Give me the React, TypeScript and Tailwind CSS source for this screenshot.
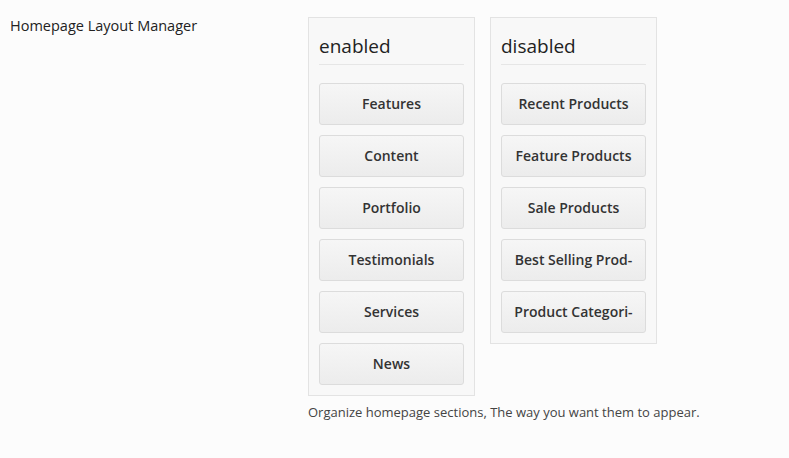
import React from "react";

const enabled = ["Features", "Content", "Portfolio", "Testimonials", "Services", "News"];
const disabled = ["Recent Products", "Feature Products", "Sale Products", "Best Selling Prod-", "Product Categori-"];

function Panel({ title, items }: { title: string; items: string[] }) {
  return (
    <div className="w-[167px] border border-[#e3e3e3] bg-[#f8f8f8] px-[10px] pt-[16px] pb-[10px]">
      <h3 className="text-[19px] leading-[24px] text-[#222] pb-[6px] border-b border-[#e6e6e6] font-normal">{title}</h3>
      <div className="mt-[18px] flex flex-col gap-[10px]">
        {items.map((it) => (
          <div
            key={it}
            className="h-[42px] w-[145px] pb-[2px] rounded-[3px] border border-[#dcdcdc] bg-gradient-to-b from-[#f6f6f6] to-[#ececec] flex items-center justify-center text-[14px] font-semibold text-[#333] whitespace-nowrap overflow-hidden"
          >
            {it}
          </div>
        ))}
      </div>
    </div>
  );
}

export default function App() {
  return (
    <div
      className="w-[789px] h-[458px] bg-[#fcfcfc] flex"
      style={{ fontFamily: '"Open Sans", sans-serif' }}
    >
      <div className="w-[308px] pl-[10px] pt-[16px] text-[14.5px] leading-[20px] text-[#222]">Homepage Layout Manager</div>
      <div className="pt-[17px] flex flex-col">
        <div className="flex items-start gap-[15px]">
          <Panel title="enabled" items={enabled} />
          <Panel title="disabled" items={disabled} />
        </div>
        <p className="mt-[6px] text-[13px] leading-[20px] text-[#444]">
          Organize homepage sections, The way you want them to appear.
        </p>
      </div>
    </div>
  );
}
